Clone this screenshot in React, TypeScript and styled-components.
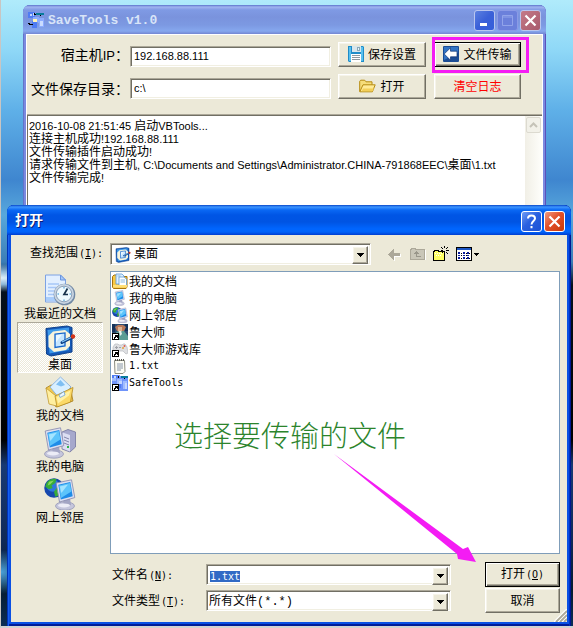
import React, { useEffect, useRef } from "react";
import styled, { createGlobalStyle, css } from "styled-components";

const face = "#ece9d8";
const cjk = '"Noto Sans CJK SC", sans-serif';
const latin = '"Liberation Sans", "Noto Sans CJK SC", sans-serif';

const GlobalStyle = createGlobalStyle`
  * { box-sizing: border-box; }
  body { margin: 0; font-family: "Liberation Sans", ${cjk}; font-size: 12px; color: #000; }
  button, input, select { font: inherit; color: inherit; margin: 0; border-radius: 0; }
  svg { display: block; flex: none; }
`;

const raised = css`
  border: 1px solid;
  border-color: #fff #716f64 #716f64 #fff;
  box-shadow: inset -1px -1px #aca899, inset 1px 1px #f6f4ea;
`;
const sunken = css`
  border: 1px solid;
  border-color: #aca899 #fff #fff #aca899;
  box-shadow: inset 1px 1px #716f64, inset -1px -1px #f1efe2;
`;

const Desktop = styled.main`
  position: relative;
  min-height: max(100vh, 560px);
  overflow: hidden;
  border-left: 1px solid #c9c5c2;
  border-bottom: 2px solid #d2d2d2;
  background: radial-gradient(ellipse 60px 14px at 0 278px, #dff0fa 0, #8fb8d8 45%, transparent 100%),
    radial-gradient(ellipse 30px 22px at 0 572px, #4aa0d8 0, transparent 100%),
    linear-gradient(#b0ebfb 0, #8fd8f7 50px, #5fb0e8 110px, #3f86cf 180px, #58a8dc 215px, #3c7db5 262px, #06101c 285px, #000 440px, #183a74 465px, #102a58 540px, #061c30 590px, #0b2d55 626px);
`;

const MainWindow = styled.section`
  position: absolute;
  inset: 5px 27px 40px 22px;
  display: flex;
  flex-direction: column;
  padding: 0 3px;
  border-radius: 7px 7px 0 0;
  background: #7b8ae0;
  box-shadow: inset 1px 1px #6474c8, inset -1px 0 #5c50bc;
`;

const TitleBar = styled.header<{ $active?: boolean }>`
  display: flex;
  align-items: center;
  gap: 2px;
  height: ${(p) => (p.$active ? 30 : 29)}px;
  flex: none;
  margin: 0 ${(p) => (p.$active ? -4 : -3)}px;
  padding: ${(p) => (p.$active ? "2px 6px 0 8px" : "1px 5px 0 5px")};
  border-radius: 7px 7px 0 0;
  background: ${(p) =>
    p.$active
      ? "linear-gradient(#0846c8 0, #3d95ff 2px, #0a68f4 5px, #0055e5 10px, #0054e3 17px, #0066ff 24px, #0062f8 27px, #003dd0 30px)"
      : "linear-gradient(#5c74cc 0, #a0b4f0 2px, #7f9ae4 5px, #7a93dd 12px, #7c99e2 20px, #86a8ee 26px, #7486d2 29px)"};
`;

const Title = styled.h1<{ $active?: boolean }>`
  flex: 1;
  margin: 0;
  font: bold 13px/20px "Liberation Mono", ${cjk};
  color: ${(p) => (p.$active ? "#fff" : "#d8e4f8")};
  ${(p) => (p.$active ? "font-size: 14px; text-shadow: 1px 1px #0a1e78;" : "padding: 1px 0 0 2px;")}
`;

const captionColors = {
  blue: "linear-gradient(135deg, #6f9cf5, #2a60e0 45%, #1c52d4)",
  blueDim: "linear-gradient(135deg, #5b80e0, #3a60d8 50%, #3560da)",
  faint: "#6b80db",
  redDim: "linear-gradient(135deg, #c47a88, #a85a6c)",
  red: "linear-gradient(135deg, #f09a80, #e2502a 45%, #c83808)",
};
const CaptionButton = styled.button<{ $tone: keyof typeof captionColors }>`
  display: grid;
  place-items: center;
  width: 21px;
  height: 21px;
  flex: none;
  padding: 0;
  border: 1px solid ${(p) => (p.$tone === "faint" ? "#8b9be6" : p.$tone.endsWith("Dim") ? "#b9c6ef" : "#fff")};
  border-radius: 3px;
  background: ${(p) => captionColors[p.$tone]};
`;
const CaptionButtons = styled.div`
  display: flex;
  gap: 2px;
`;

const MainBody = styled.div`
  flex: 1;
  display: flex;
  flex-direction: column;
  border: 1px solid #fff;
  border-bottom: 0;
  background: ${face};
`;

const Settings = styled.form`
  display: grid;
  grid-template-columns: 96px 1fr 88px 88px;
  column-gap: 7px;
  row-gap: 7px;
  align-items: end;
  padding: 7px 21px 15px 0;
`;

const SettingLabel = styled.label`
  margin-right: -6px;
  font: 14px/22px ${cjk};
  text-align: right;
  white-space: nowrap;
`;
const LabelLatin = styled.span`
  font: 13px/22px ${latin};
`;

const TextInput = styled.input`
  width: 100%;
  height: 21px;
  min-width: 0;
  padding: 0 3px 2px;
  outline: 0;
  background: #fff;
  font: 11px/17px ${latin};
  ${sunken}
`;

const PushButton = styled.button<{ $default?: boolean; $danger?: boolean }>`
  display: flex;
  align-items: center;
  justify-content: center;
  gap: 4px;
  height: 25px;
  padding: 0 0 1px;
  background: ${face};
  font: 12px/18px ${cjk};
  white-space: nowrap;
  ${raised}
  ${(p) => p.$default && "border-color: #000; box-shadow: inset 1px 1px #fff, inset -1px -1px #716f64, inset -2px -2px #aca899;"}
  ${(p) => p.$danger && "color: #f00;"}
`;

const ActionCell = styled.div<{ $marked?: boolean }>`
  position: relative;
  display: grid;
  margin-left: 1px;
  ${(p) =>
    p.$marked &&
    css`
      &::after {
        content: "";
        position: absolute;
        inset: -5px -8px -6px -2px;
        border: 3px solid #f41cf4;
        pointer-events: none;
      }
    `}
`;

const LogArea = styled.div`
  flex: 1;
  display: flex;
  border-top: 1px solid #aca899;
  background: #fff;
  box-shadow: inset 1px 1px #716f64;
`;
const LogText = styled.div`
  flex: 1;
  min-width: 0;
  padding: 3px 2px;
  font: 12px/13px ${cjk};
  white-space: nowrap;
  p { margin: 0; height: 13px; }
`;
const Latin = styled.span`
  font: 11px/13px ${latin};
`;
const ScrollTrack = styled.div`
  width: 17px;
  flex: none;
  margin-top: 1px;
  background: linear-gradient(90deg, #f1efe6, #fefefb);
`;
const ScrollButton = styled.button`
  display: grid;
  place-items: center;
  width: 15px;
  height: 16px;
  margin: 1px;
  padding: 0;
  border: 1px solid #dcdad0;
  border-radius: 2px;
  background: #f2f1e9;
`;

const Dialog = styled.section`
  position: absolute;
  inset: 205px 2px 0 6px;
  display: flex;
  flex-direction: column;
  padding: 0 4px 4px;
  border-radius: 7px 7px 0 0;
  background: #0a50e4;
  box-shadow: inset 1px 0 #0030b8, inset 2px 0 #1560f0, inset -1px 0 #001690, inset -2px 0 #0030c0, inset 0 -2px #001c98;
`;
const DialogBody = styled.form`
  flex: 1;
  display: grid;
  grid-template: auto 1fr auto / 86px 1fr;
  column-gap: 7px;
  padding: 8px 7px 9px 6px;
  background: ${face};
`;
const LookRow = styled.div`
  grid-column: 1 / -1;
  display: flex;
  align-items: center;
  height: 28px;
  padding-bottom: 6px;
`;
const DialogLabel = styled.label`
  font: 12px/18px ${cjk};
  white-space: nowrap;
`;
const LookLabel = styled(DialogLabel)`
  width: 93px;
  flex: none;
  padding: 0 0 2px 13px;
`;
const Mono = styled.span`
  margin-left: 1px;
  font-family: "DejaVu Sans Mono", monospace;
  font-size: 10px;
`;
const Combo = styled.div`
  display: grid;
  grid-template-columns: auto 1fr;
  align-items: center;
  height: 22px;
  min-width: 0;
  padding: 2px;
  background: #fff;
  ${sunken}
`;
const LookCombo = styled(Combo)`
  flex: 0 1 261px;
  padding-left: 4px;
`;
const comboField = css`
  grid-area: 1 / 2;
  width: 100%;
  min-width: 0;
  height: 16px;
  padding: 0 1px;
  border: 0;
  outline: 0;
  background: transparent;
`;
const ComboSelect = styled.select`
  ${comboField}
  padding-left: 3px;
  appearance: none;
  font: 12px/16px "Liberation Mono", ${cjk};
`;
const TypeSelect = styled(ComboSelect)`
  padding-left: 0;
`;
const ComboInput = styled.input`
  ${comboField}
  font: 10px/14px "DejaVu Sans Mono", monospace;
  &::selection { background: #316ac5; color: #fff; }
`;
const ComboArrow = styled.span`
  grid-area: 1 / 2;
  justify-self: end;
  display: grid;
  place-items: center;
  width: 16px;
  height: 18px;
  background: ${face};
  pointer-events: none;
  ${raised}
`;
const Tools = styled.div`
  display: flex;
  gap: 7px;
  margin-left: 16px;
`;
const ToolButton = styled.button`
  padding: 0;
  border: 0;
  background: none;
`;

const Places = styled.nav`
  grid-row: 2 / 4;
  display: flex;
  flex-direction: column;
`;
const Place = styled.button<{ $selected?: boolean }>`
  display: flex;
  flex-direction: column;
  align-items: center;
  height: 51px;
  padding: 2px 0 0;
  border: 1px solid transparent;
  background: none;
  font: 12px/13px ${cjk};
  white-space: nowrap;
  ${(p) => p.$selected && "border-color: #aca899 #fff #fff #aca899; background: repeating-conic-gradient(#fff 0 25%, #ece9d8 0 50%) 0 0 / 2px 2px;"}
`;

const FileArea = styled.div`
  position: relative;
  border: 1px solid #7f9db9;
  background: #fff;
`;
const FileList = styled.ul`
  margin: 0;
  padding: 0 1px;
  list-style: none;
`;
const FileItem = styled.li`
  display: flex;
  align-items: center;
  gap: 1px;
  height: 17px;
  font: 12px/17px ${cjk};
`;
const FileLatin = styled(Mono)`
  margin: 0;
`;
const Caption = styled.p`
  position: absolute;
  top: 142px;
  left: 63px;
  margin: 0;
  font: 300 29px/40px ${cjk};
  color: #2c842c;
  white-space: nowrap;
`;
const Pointer = styled.svg`
  position: absolute;
  top: 180px;
  left: 221px;
  overflow: visible;
  z-index: 1;
`;

const Footer = styled.div`
  display: grid;
  row-gap: 1px;
  padding: 8px 0 0 2px;
`;
const FooterRow = styled.div`
  display: grid;
  grid-template-columns: 94px 1fr 75px;
  align-items: center;
`;
const FooterCombo = styled(Combo)`
  margin-right: 34px;
  height: 21px;
`;
const Grip = styled.svg`
  position: absolute;
  right: 4px;
  bottom: 4px;
`;

/* ---------- icons ---------- */

const AppIcon = () => (
  <svg width="16" height="16" viewBox="0 0 16 16" shapeRendering="crispEdges">
    <path fill="#4f7cf4" d="M0 0h7v6H0zM4 9h5v7H4z" />
    <path fill="#c3d6ff" d="M2 2h2v2H2zM5 1h1v3H5z" />
    <path fill="#8cacff" d="M5 5h6v5H5zM10 6h6v9h-5z" />
    <path fill="#cadcff" d="M12 9h3v5h-3z" />
    <path fill="#087c9c" d="M8 1h8v2H8z" />
    <path fill="#fff5b8" d="M5 7h4v3H5z" />
    <path d="M6 1h1v1h1v1H6zM0 11h2v1h2v1H1zM4 12h1v1H4zM12 3h1v1h-1z" />
  </svg>
);
const CloseGlyph = () => (
  <svg width="13" height="13" viewBox="0 0 13 13" stroke="#fff" strokeWidth="2.2">
    <path d="M1.5 1.5l10 10M11.5 1.5l-10 10" />
  </svg>
);
const SaveIcon = () => (
  <svg width="16" height="16" viewBox="0 0 16 16">
    <path fill="#1f8cc8" d="M0 0h15l1 1v15H1l-1-1z" />
    <path fill="#58c0ee" d="M1 1h2v14H1zM13 1h2v14h-2z" />
    <path fill="#d9e6ec" d="M4 0h9v6H4z" />
    <path fill="#8ba8b6" d="M9 1h3v4H9z" />
    <path fill="#e9f6fb" d="M10 2h1v2h-1z" />
    <path fill="#fff" d="M3 8h10v8H3z" />
    <path fill="#8d989e" d="M4 9h8v1H4zM4 11h8v1H4zM4 13h8v1H4z" />
  </svg>
);
const TransferIcon = () => (
  <svg width="16" height="16" viewBox="0 0 16 16">
    <rect width="16" height="16" rx="1" fill="#1b4c94" />
    <path fill="#3274c4" d="M1 1h14v6L1 14z" />
    <path fill="#fff" stroke="#0f3170" strokeWidth=".7" d="M1.200 8L7.500 1.800v3.400H14v5.600H7.500v3.400z" />
  </svg>
);
const OpenIcon = () => (
  <svg width="17" height="16" viewBox="0 0 17 16">
    <path fill="#f6dd7a" stroke="#b58a10" d="M.7 13.500V3.200l1-1h4l1.300 1.600h6v3" />
    <path fill="#ffeb98" stroke="#b58a10" strokeLinejoin="round" d="M.8 13.800L4 6.800h12.200l-2.800 7z" />
    <path fill="#f3cf59" d="M4 10.500h11l-1.500 2.800H2.500z" />
  </svg>
);
const Caret = () => (
  <svg width="7" height="4" viewBox="0 0 7 4" shapeRendering="crispEdges">
    <path d="M0 0h7v1H0zM1 1h5v1H1zM2 2h3v1H2zM3 3h1v1H3z" />
  </svg>
);

const Monitor = () => (
  <g>
    <ellipse cx="10" cy="27" rx="9.500" ry="4.200" fill="#c5c6dc" stroke="#8d8fb0" strokeWidth=".7" />
    <path fill="#a3a5c4" d="M8 20l7-1 1 7-7 2z" />
    <ellipse cx="9" cy="26.400" rx="6" ry="2" fill="#ececf6" />
    <path fill="#dcdff0" stroke="#8487ad" strokeWidth=".8" d="M1.200 4L16.500.8l3.300 17.800L4.500 23z" />
    <path fill="#1f8ce8" d="M3.300 5.700L15.300 3l2.400 14.200L5.800 20.400z" />
    <path fill="#5cc4fb" d="M4 6.500L14.900 4.100l1.500 8.400L6 19z" />
    <path fill="#a4e4ff" d="M4.800 7.500L13 5.600 6.400 14z" />
  </g>
);
const Globe = ({ r = 8 }: { r?: number }) => (
  <g transform={`scale(${r / 8})`}>
    <circle cx="8" cy="8" r="7.800" fill="#1748ae" />
    <circle cx="7" cy="6" r="5" fill="#2e78df" />
    <path fill="#38ac38" d="M2 4c2-3 6-4 8-3l-1 3-3 2 1 2-3 1-3-2zM10 8l4-1 1 2-3 5-3 1-1-4z" />
    <path fill="#8ad85e" d="M4 3l4-1-3 3-2 1zM11 9l2 0-2 3z" />
  </g>
);
const RecentIcon = () => (
  <svg width="32" height="32" viewBox="0 0 32 32">
    <path fill="#e2efff" stroke="#7ca2e4" d="M1.500 1h15l5 5v22h-20z" />
    <path fill="#a8c8f8" stroke="#6a96e0" d="M16.500 1v5h5z" />
    <path stroke="#a7c7f7" strokeWidth="1.400" d="M4 10h11M4 13.500h8M4 17h6M4 20.500h6M4 24h8" />
    <path fill="#a9cdfb" d="M2 23h19v4H2z" />
    <circle cx="20.500" cy="20.500" r="10.800" fill="#7088a4" />
    <circle cx="20" cy="20" r="10" fill="#c9d5e2" />
    <circle cx="20" cy="20" r="7.800" fill="#eefaff" stroke="#8fa2b8" />
    <path fill="none" stroke="#17324c" strokeWidth="1.700" d="M23.500 14.500L20 20.500h4" />
    <path stroke="#2e8fd0" d="M20 13v1.500M13.500 20H15M20 25.500V27M25.500 20H27" />
  </svg>
);
const DesktopIcon = ({ size = 32 }: { size?: number }) => (
  <svg width={size} height={size} viewBox="0 0 32 32">
    <path fill="#1559b8" stroke="#0c418c" d="M2 3.500L23 1l5 1.500V27L7 31l-4.500-2z" />
    <path fill="#3f9bea" d="M3.500 5L25 2.500V25L5.500 28.500z" />
    <path fill="#f8f4dc" d="M9 6.500l12-1.500 5 4v12l-4 4-12 2-5.500-5V11z" />
    <path fill="#c5e6ff" stroke="#1566cc" strokeWidth="1.300" d="M11 9.200l10-1.300v13l-10 1.500z" />
    <path fill="#ecf8ff" d="M12 10.300l6-.8-6 8z" />
    <path stroke="#0c3f86" strokeWidth="3" strokeLinecap="round" d="M18 17.500l10.500-5.300" />
    <path stroke="#7ec4fa" strokeWidth="1.300" d="M18 17l9-4.500" />
    <circle cx="29" cy="11.500" r="2.200" fill="#d23418" />
  </svg>
);
const DocsIcon = () => (
  <svg width="32" height="32" viewBox="0 0 32 32">
    <path fill="#f0c850" stroke="#a67b1a" strokeWidth=".8" d="M2 12l5-3 8 2 11-1 3 15-17 6z" />
    <path fill="#d9efff" stroke="#7da9dc" strokeWidth=".8" d="M16.500 1L27 11 16 23 6 11z" />
    <path fill="#7fbff2" d="M16.500 4l4.500 5-4 1.500-5-2z" />
    <path fill="#ffeFa0" stroke="#c19b34" strokeWidth=".8" d="M2 12l10 8 2.500 10.500L5 28z" />
    <path fill="#fbd968" stroke="#b58a20" strokeWidth=".8" d="M11 20l18-8.500L26.500 26 13 31z" />
    <path fill="#fff1a6" d="M12.500 21l14-6.500-1.500 5-11 8z" />
    <path fill="#e8f5ff" stroke="#6099d4" strokeWidth=".7" d="M15 19l5-3.500 1 3.500-5 2.500z" />
  </svg>
);
const ComputerIcon = () => (
  <svg width="32" height="32" viewBox="0 0 32 32">
    <path fill="#a6a8cc" stroke="#73769f" strokeWidth=".8" d="M18 5l6-2.500 7.500 2.500V20l-5.500 5-8-3z" />
    <path fill="#dcdef2" d="M18.500 5.500L26 8v16.500l-7.500-3z" />
    <path stroke="#8285ab" d="M20 10l5 2M20 13l5 2M20 16l5 2" />
    <path fill="#32b54a" d="M23 19h2v2h-2z" />
    <Monitor />
  </svg>
);
const NetworkIcon = ({ size = 32 }: { size?: number }) => (
  <svg width={size} height={size} viewBox="0 0 32 32">
    <Globe r={10} />
    <g transform="translate(11 1)"><Monitor /></g>
  </svg>
);
const SmallMonitor = () => (
  <svg width="16" height="16" viewBox="-5 0 32 32"><Monitor /></svg>
);
const SmallDocs = () => (
  <svg width="16" height="16" viewBox="0 0 16 16">
    <path fill="#f9c943" stroke="#a8740c" d="M.5 14V3.500L2 2h3l1 1.500h9V14l-1 1.500H1.500z" />
    <path fill="#dff1ff" stroke="#5b9bd5" strokeWidth=".8" d="M4 1h6l2 2v8H4z" />
    <path fill="#fff" stroke="#5b9bd5" strokeWidth=".8" d="M7 4h5l2.500 2v7H7z" />
    <path stroke="#6da8de" strokeWidth=".8" d="M8.500 7H13M8.500 9H13M5.500 3h3" />
    <path fill="#ffdf78" d="M1 12h14v2.500H1z" />
  </svg>
);
const Shortcut = () => (
  <g shapeRendering="crispEdges">
    <path fill="#fff" stroke="#000" d="M.5 9.500h6v6h-6z" />
    <path d="M3 11h3v3H5v-1H4v1H3v1H2v-2h1v-1h1H3z" />
  </g>
);
const MasterIcon = () => (
  <svg width="16" height="16" viewBox="0 0 16 16">
    <path fill="#2d4c72" d="M0 0h16v16H0z" />
    <path fill="#16335a" d="M0 0h3v8H0zM13 0h3v7h-3z" />
    <path fill="#5a9c94" d="M4 8l4-1 4 0 4 5v4H6z" />
    <path fill="#b97858" d="M3 3l3-2h5l3 2-2 4H5z" />
    <path fill="#dcb494" d="M6 3h4v4L8 9 6 7z" />
    <path fill="#e8f0ec" d="M7 7h2l1 3-2 2z" />
    <Shortcut />
  </svg>
);
const GameIcon = () => (
  <svg width="16" height="16" viewBox="0 0 16 16">
    <path fill="#dedfe2" stroke="#b8babf" strokeWidth=".7" d="M3 3h3l1 1h3l1-1h2l2 3 1 6-2 1-3-3H5l-2 3-2-1L1 6z" />
    <path stroke="#a0a2a8" d="M3 6.500h3M4.500 5v3M7 6.500h2" />
    <circle cx="12.500" cy="5" r="1" fill="#e25a4e" />
    <circle cx="11" cy="7" r="1" fill="#e5a23c" />
    <Shortcut />
  </svg>
);
const TextIcon = () => (
  <svg width="16" height="16" viewBox="0 0 16 16">
    <path fill="#fdfdf4" stroke="#8c8c80" d="M2.500 2.500h10l.5 11-2 2h-8z" />
    <path stroke="#55554d" strokeDasharray="1 1" strokeWidth="2" d="M3 2h10" />
    <path stroke="#7b8ba0" strokeWidth=".9" d="M5 6h6M5 8h6M5 10h6M5 12h4" />
  </svg>
);
const SafeIcon = () => (
  <svg width="16" height="16" viewBox="0 0 16 16" shapeRendering="crispEdges">
    <path fill="#6f94fa" d="M0 0h16v16H0z" />
    <path fill="#4f7cf4" d="M0 0h6v3H0zM4 9h5v4H4z" />
    <path fill="#a0bcff" d="M0 3h4v3H0zM5 4h5v5H5zM11 6h4v8h-4z" />
    <path fill="#c5d8ff" d="M2 1h2v2H2zM7 6h3v3H7zM13 8h2v6h-2z" />
    <path fill="#fff" d="M8 0h8v1H8z" />
    <path fill="#087c9c" d="M9 1h7v2H9z" />
    <path d="M6 1h1v2H6zM12 3h1v1h-1z" />
    <Shortcut />
  </svg>
);
const BackIcon = () => (
  <svg width="16" height="16" viewBox="0 0 16 16" shapeRendering="crispEdges">
    <path fill="#fff" d="M7 4v4h7v3H8v4H7z" />
    <path fill="#aca899" d="M1 8h1V7h1V6h1V5h1V4h1V3h1v4h6v3H7v4H6v-1H5v-1H4v-1H3v-1H2V9H1z" />
  </svg>
);
const UpIcon = () => (
  <svg width="16" height="16" viewBox="0 0 16 16" shapeRendering="crispEdges">
    <path fill="#fff" d="M2 14h14V4h-1v9H2z" />
    <path fill="#c9c6b8" stroke="#aca899" d="M.5 13.500v-10h1v-1h4v1h9v10z" />
    <path fill="#99968a" d="M6 5h1v1h1v1h1v1H7v2h4v1H6V8H4V7h1V6h1z" />
  </svg>
);
const NewFolderIcon = () => (
  <svg width="16" height="16" viewBox="0 0 16 16" shapeRendering="crispEdges">
    <path fill="#ffff63" stroke="#000" d="M.5 14.500v-9h1v-1h4v1h6v9z" />
    <path fill="#fff" d="M2 7h1v1H2zM4 7h1v1H4zM6 7h1v1H6zM8 7h1v1H8zM3 9h1v1H3zM5 9h1v1H5zM7 9h1v1H7z" />
    <path d="M11 0h1v2h-1zM11 6h1v3h-1zM8 4h2v1H8zM13 4h3v1h-3zM9 2h1v1H9zM8 1h1v1H8zM13 2h1v1h-1zM14 1h1v1h-1zM13 6h1v1h-1zM14 7h1v1h-1zM9 6h1v1H9z" />
  </svg>
);
const ViewIcon = () => (
  <svg width="24" height="16" viewBox="0 0 24 16" shapeRendering="crispEdges">
    <path fill="#fff" stroke="#000" d="M.5 1.500h15v13H.5z" />
    <path fill="#1c56c4" d="M1 2h14v2H1z" />
    <path fill="#0a1c9c" d="M2 6h2v2H2zM7 6h2v2H7zM11 6h2v2h-2zM2 9h2v1H2zM7 9h2v1H7zM11 9h2v1h-2zM2 11h2v2H2zM7 11h2v2H7zM11 11h2v2h-2z" />
    <path d="M5 7h1v1H5zM10 7h1v1h-1zM13 7h1v1h-1zM5 9h1v1H5zM10 9h1v1h-1zM5 12h1v1H5zM10 12h1v1h-1zM13 12h1v1h-1zM18 7h5v1h-5zM19 8h3v1h-3zM20 9h1v1h-1z" />
  </svg>
);

const places = [
  { name: "我最近的文档", icon: <RecentIcon /> },
  { name: "桌面", icon: <DesktopIcon />, selected: true },
  { name: "我的文档", icon: <DocsIcon /> },
  { name: "我的电脑", icon: <ComputerIcon /> },
  { name: "网上邻居", icon: <NetworkIcon /> },
];
const files = [
  { name: "我的文档", icon: <SmallDocs /> },
  { name: "我的电脑", icon: <SmallMonitor /> },
  { name: "网上邻居", icon: <NetworkIcon size={16} /> },
  { name: "鲁大师", icon: <MasterIcon /> },
  { name: "鲁大师游戏库", icon: <GameIcon /> },
  { name: "1.txt", icon: <TextIcon />, latin: true },
  { name: "SafeTools", icon: <SafeIcon />, latin: true },
];

const SaveToolsWindow = () => (
  <MainWindow aria-label="SaveTools v1.0">
    <TitleBar>
      <AppIcon />
      <Title>SaveTools v1.0</Title>
      <CaptionButtons>
        <CaptionButton $tone="blueDim" aria-label="最小化">
          <svg width="13" height="13"><path fill="#fff" d="M2 9h7v3H2z" /></svg>
        </CaptionButton>
        <CaptionButton $tone="faint" aria-label="最大化" disabled>
          <svg width="13" height="13" fill="none" stroke="#92a4ea"><path d="M1.500 1.500h10v10h-10zM1 3h11" /></svg>
        </CaptionButton>
        <CaptionButton $tone="redDim" aria-label="关闭"><CloseGlyph /></CaptionButton>
      </CaptionButtons>
    </TitleBar>
    <MainBody>
      <Settings onSubmit={(e) => e.preventDefault()}>
        <SettingLabel htmlFor="host">宿主机<LabelLatin>IP</LabelLatin>：</SettingLabel>
        <TextInput id="host" defaultValue="192.168.88.111" />
        <PushButton type="button"><SaveIcon />保存设置</PushButton>
        <ActionCell $marked><PushButton type="submit" $default><TransferIcon />文件传输</PushButton></ActionCell>
        <SettingLabel htmlFor="dir">文件保存目录：</SettingLabel>
        <TextInput id="dir" defaultValue="c:\" />
        <PushButton type="button"><OpenIcon />打开</PushButton>
        <ActionCell><PushButton type="button" $danger>清空日志</PushButton></ActionCell>
      </Settings>
      <LogArea>
        <LogText role="log">
          <p><Latin>2016-10-08 21:51:45 </Latin>启动<Latin>VBTools...</Latin></p>
          <p>连接主机成功<Latin>!192.168.88.111</Latin></p>
          <p>文件传输插件启动成功<Latin>!</Latin></p>
          <p>请求传输文件到主机<Latin>, C:\Documents and Settings\Administrator.CHINA-791868EEC\</Latin>桌面<Latin>\1.txt</Latin></p>
          <p>文件传输完成<Latin>!</Latin></p>
        </LogText>
        <ScrollTrack>
          <ScrollButton aria-label="向上滚动">
            <svg width="9" height="6" fill="none" stroke="#c5c3b8" strokeWidth="2"><path d="M1 5l3.500-3.500L8 5" /></svg>
          </ScrollButton>
        </ScrollTrack>
      </LogArea>
    </MainBody>
  </MainWindow>
);

const OpenDialog = () => {
  const nameRef = useRef<HTMLInputElement>(null);
  useEffect(() => {
    nameRef.current?.focus();
    nameRef.current?.select();
  }, []);
  return (
    <Dialog role="dialog" aria-label="打开">
      <TitleBar $active>
        <Title as="h2" $active>打开</Title>
        <CaptionButtons>
          <CaptionButton $tone="blue" aria-label="帮助">
            <svg width="13" height="15" viewBox="0 0 13 15" fill="none" stroke="#fff" strokeWidth="2">
              <path d="M3 4.500C3 .5 10 .5 10 4.500 10 7 6.500 7 6.500 10.500M6.500 12v2.200" />
            </svg>
          </CaptionButton>
          <CaptionButton $tone="red" aria-label="关闭"><CloseGlyph /></CaptionButton>
        </CaptionButtons>
      </TitleBar>
      <DialogBody onSubmit={(e) => e.preventDefault()}>
        <LookRow>
          <LookLabel htmlFor="look">查找范围<Mono>(<u>I</u>):</Mono></LookLabel>
          <LookCombo>
            <DesktopIcon size={16} />
            <ComboSelect id="look"><option>桌面</option></ComboSelect>
            <ComboArrow><Caret /></ComboArrow>
          </LookCombo>
          <Tools>
            <ToolButton type="button" aria-label="后退" disabled><BackIcon /></ToolButton>
            <ToolButton type="button" aria-label="向上一级" disabled><UpIcon /></ToolButton>
            <ToolButton type="button" aria-label="新建文件夹"><NewFolderIcon /></ToolButton>
            <ToolButton type="button" aria-label="查看"><ViewIcon /></ToolButton>
          </Tools>
        </LookRow>
        <Places>
          {places.map((p) => (
            <Place key={p.name} type="button" $selected={p.selected}>{p.icon}{p.name}</Place>
          ))}
        </Places>
        <FileArea>
          <FileList>
            {files.map((f) => (
              <FileItem key={f.name}>{f.icon}{f.latin ? <FileLatin>{f.name}</FileLatin> : f.name}</FileItem>
            ))}
          </FileList>
          <Caption>选择要传输的文件</Caption>
          <Pointer width="144" height="112" viewBox="0 0 144 112">
            <path fill="#f41cf4" d="M2 2L131 97l5-2 8 15-18-3-1-5z" />
          </Pointer>
        </FileArea>
        <Footer>
          <FooterRow>
            <DialogLabel htmlFor="filename">文件名<Mono>(<u>N</u>):</Mono></DialogLabel>
            <FooterCombo>
              <ComboInput id="filename" ref={nameRef} defaultValue="1.txt" />
              <ComboArrow><Caret /></ComboArrow>
            </FooterCombo>
            <PushButton type="submit" $default><span>打开<Mono>(<u>O</u>)</Mono></span></PushButton>
          </FooterRow>
          <FooterRow>
            <DialogLabel htmlFor="filetype">文件类型<Mono>(<u>T</u>):</Mono></DialogLabel>
            <FooterCombo>
              <TypeSelect id="filetype"><option>所有文件(*.*)</option></TypeSelect>
              <ComboArrow><Caret /></ComboArrow>
            </FooterCombo>
            <PushButton type="button">取消</PushButton>
          </FooterRow>
        </Footer>
      </DialogBody>
      <Grip width="13" height="13" viewBox="0 0 13 13">
        <path stroke="#fff" strokeWidth="1.500" d="M0 13L13 0M4 13l9-9M8 13l5-5" />
        <path stroke="#aca899" strokeWidth="1.800" d="M2 13L13 2M6 13l7-7M10 13l3-3" />
      </Grip>
    </Dialog>
  );
};

export default function App() {
  return (
    <>
      <GlobalStyle />
      <Desktop>
        <SaveToolsWindow />
        <OpenDialog />
      </Desktop>
    </>
  );
}
